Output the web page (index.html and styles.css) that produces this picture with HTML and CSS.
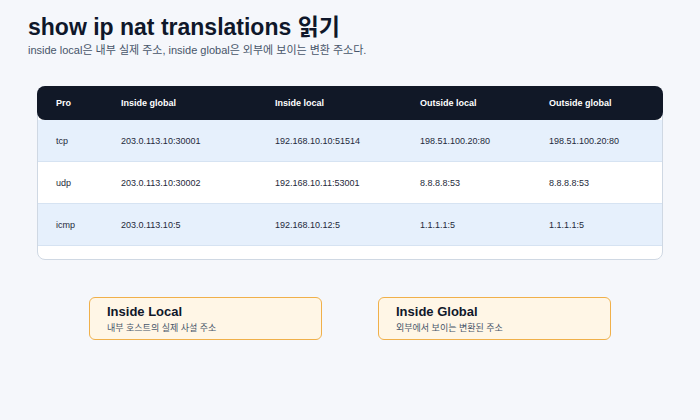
FILE: index.html
```html
<!DOCTYPE html>
<html lang="ko">
<head>
<meta charset="utf-8">
<link rel="stylesheet" href="styles.css">
</head>
<body>
<main class="page">
  <h1 class="title">show ip nat translations 읽기</h1>
  <p class="subtitle">inside local은 내부 실제 주소, inside global은 외부에 보이는 변환 주소다.</p>

  <section class="table-card">
    <div class="row head">
      <div>Pro</div><div>Inside global</div><div>Inside local</div><div>Outside local</div><div>Outside global</div>
    </div>
    <div class="row alt">
      <div>tcp</div><div>203.0.113.10:30001</div><div>192.168.10.10:51514</div><div>198.51.100.20:80</div><div>198.51.100.20:80</div>
    </div>
    <div class="row">
      <div>udp</div><div>203.0.113.10:30002</div><div>192.168.10.11:53001</div><div>8.8.8.8:53</div><div>8.8.8.8:53</div>
    </div>
    <div class="row alt">
      <div>icmp</div><div>203.0.113.10:5</div><div>192.168.10.12:5</div><div>1.1.1.1:5</div><div>1.1.1.1:5</div>
    </div>
  </section>

  <section class="legend">
    <div class="note">
      <div class="note-title">Inside Local</div>
      <div class="note-text">내부 호스트의 실제 사설 주소</div>
    </div>
    <div class="note">
      <div class="note-title">Inside Global</div>
      <div class="note-text">외부에서 보이는 변환된 주소</div>
    </div>
  </section>
</main>
</body>
</html>
```
FILE: styles.css
```css
* { box-sizing: border-box; }
html, body { margin: 0; padding: 0; }
body {
  background: #f5f7fb;
  font-family: "Liberation Sans", Arial, "Noto Sans CJK KR", sans-serif;
  width: 700px;
  height: 420px;
  overflow: hidden;
}
.page {
  padding: 13px 28px 0 28px;
}
.title {
  margin: 0;
  font-size: 23px;
  line-height: 28px;
  font-weight: 700;
  color: #0f172a;
}
.subtitle {
  margin: 2px 0 0 0;
  font-size: 11px;
  line-height: 15px;
  color: #475569;
}
.table-card {
  margin: 28px 9px 0 9px;
  background: #ffffff;
  border: 1px solid #cfd8e3;
  border-radius: 8px;
  padding-bottom: 13px;
}
.row {
  display: grid;
  grid-template-columns: 65px 154px 145px 129px 1fr;
  align-items: center;
  padding-left: 18px;
  height: 42px;
  font-size: 9px;
  color: #1e293b;
  border-bottom: 1px solid #d6e3f2;
}
.row.alt { background: #e6f0fc; }
.row.head {
  margin: -1px -1px 0 -1px;
  padding-left: 19px;
  height: 34px;
  background: #111827;
  color: #ffffff;
  font-weight: 700;
  border-radius: 8px;
  border-bottom: none;
}
.legend {
  display: flex;
  justify-content: center;
  gap: 56px;
  margin-top: 37px;
}
.note {
  width: 233px;
  height: 43px;
  background: #fff6e6;
  border: 1px solid #f0b04a;
  border-radius: 6px;
  padding: 6px 17px 0 17px;
}
.note-title {
  font-size: 13px;
  line-height: 16px;
  font-weight: 700;
  color: #0f172a;
}
.note-text {
  margin-top: 2px;
  font-size: 9px;
  line-height: 12px;
  color: #475569;
}
```
